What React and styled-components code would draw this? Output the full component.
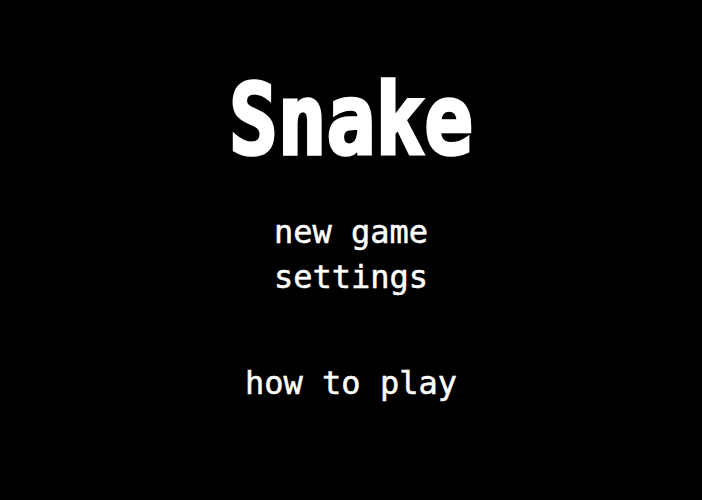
import styled, { createGlobalStyle } from 'styled-components';

const GlobalStyle = createGlobalStyle`
  html, body {
    margin: 0;
    background: #000;
  }
`;

const Screen = styled.main`
  width: 702px;
  height: 500px;
  background: #000;
  color: #fff;
  font-family: 'DejaVu Sans Mono', 'Liberation Mono', monospace;
  display: flex;
  flex-direction: column;
  align-items: center;
  padding-top: 85px;
  box-sizing: border-box;
`;

/* blocky title: stretched vertically from its baseline, strokes thickened */
const Title = styled.h1`
  margin: 0 0 43px;
  font-size: 81px;
  line-height: 82px;
  font-weight: bold;
  -webkit-text-stroke: 3px #fff;
  transform: scaleY(1.2);
  transform-origin: 50% 69px;
`;

const Menu = styled.nav`
  display: flex;
  flex-direction: column;
  align-items: center;
`;

const Group = styled.div`
  display: flex;
  flex-direction: column;
  align-items: center;
  margin-bottom: ${(p) => p.$gap || 0}px;
`;

const Item = styled.button`
  background: none;
  border: 0;
  padding: 0;
  color: #fff;
  font-family: inherit;
  font-size: 32px;
  line-height: 45px;
  -webkit-text-stroke: 0.5px #fff;
  cursor: pointer;
`;

function App() {
  return (
    <>
      <GlobalStyle />
      <Screen>
        <Title>Snake</Title>
        <Menu>
          <Group $gap={61}>
            <Item>new game</Item>
            <Item>settings</Item>
          </Group>
          <Item>how to play</Item>
        </Menu>
      </Screen>
    </>
  );
}

export default App;
